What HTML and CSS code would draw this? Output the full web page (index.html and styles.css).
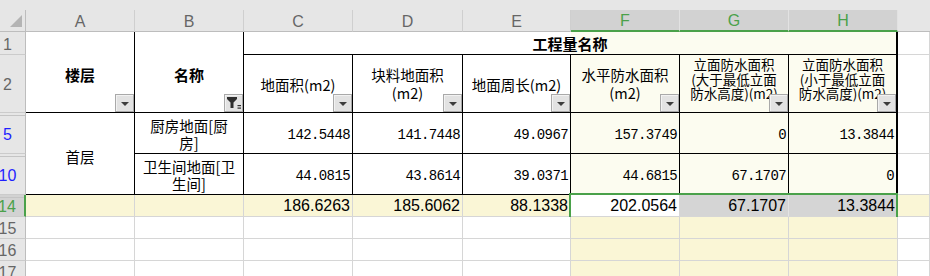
FILE: index.html
```html
<!DOCTYPE html>
<html lang="zh-CN">
<head>
<meta charset="utf-8">
<title>工程量名称</title>
<link rel="stylesheet" href="styles.css">
</head>
<body>
<div class="sheet">
  <div class="strip"></div>

  <!-- column header -->
  <div class="corner"><svg width="25" height="21" viewBox="0 0 25 21"><polygon points="22,5 22,17 10,17" fill="#b4b4b4"/></svg></div>
  <div class="colhdr ca">A</div>
  <div class="colhdr cb">B</div>
  <div class="colhdr cc">C</div>
  <div class="colhdr cd">D</div>
  <div class="colhdr ce">E</div>
  <div class="colhdr cf sel">F</div>
  <div class="colhdr cg sel">G</div>
  <div class="colhdr ch sel">H</div>
  <div class="colhdr ci"></div>

  <!-- row 1 -->
  <div class="rowhdr r1"><span>1</span></div>
  <div class="cell tb ca r12 bold pad4"><span>楼层</span><span class="fbtn"></span></div>
  <div class="cell tb cb r12 bold pad4"><span>名称</span><span class="fbtn on"><svg width="19" height="18" viewBox="0 0 19 18"><polygon points="3,3 13,3 13,5 9.5,8.5 9.5,14 6.5,14 6.5,8.5 3,5" fill="#2e2e2e"/><rect x="13.5" y="11" width="3.5" height="1.2" fill="#2e2e2e"/><rect x="13.5" y="13.5" width="3.5" height="1.2" fill="#2e2e2e"/></svg></span></div>
  <div class="cell tb title r1 bold"><span>工程量名称</span></div>
  <div class="cell ci r1"></div>

  <!-- row 2 -->
  <div class="rowhdr r2"><span>2</span></div>
  <div class="cell tb cc r2 hd pad2"><span>地面积(m2)</span><span class="fbtn"></span></div>
  <div class="cell tb cd r2 hd two"><span>块料地面积<br>(m2)</span><span class="fbtn"></span></div>
  <div class="cell tb ce r2 hd pad2"><span>地面周长(m2)</span><span class="fbtn"></span></div>
  <div class="cell tb cf r2 hd two cream"><span>水平防水面积<br>(m2)</span><span class="fbtn"></span></div>
  <div class="cell tb cg r2 hd three cream"><span>立面防水面积<br>(大于最低立面<br>防水高度)(m2)</span><span class="fbtn"></span></div>
  <div class="cell tb ch r2 hd three cream edge"><span>立面防水面积<br>(小于最低立面<br>防水高度)(m2)</span><span class="fbtn"></span></div>
  <div class="cell ci r2"></div>

  <!-- row 5 -->
  <div class="rowhdr r5 hidden-above blue"><span>5</span></div>
  <div class="cell tb ca r510 txt pad6"><span>首层</span></div>
  <div class="cell tb cb r5 txt two-b"><span>厨房地面[厨<br>房]</span></div>
  <div class="cell tb cc r5 num"><span>142.5448</span></div>
  <div class="cell tb cd r5 num"><span>141.7448</span></div>
  <div class="cell tb ce r5 num"><span>49.0967</span></div>
  <div class="cell tb cf r5 num cream"><span>157.3749</span></div>
  <div class="cell tb cg r5 num cream"><span>0</span></div>
  <div class="cell tb ch r5 num cream edge"><span>13.3844</span></div>
  <div class="cell ci r5"></div>

  <!-- row 10 -->
  <div class="rowhdr r10 hidden-above blue"><span>10</span></div>
  <div class="cell tb cb r10 txt two-b"><span>卫生间地面[卫<br>生间]</span></div>
  <div class="cell tb cc r10 num"><span>44.0815</span></div>
  <div class="cell tb cd r10 num"><span>43.8614</span></div>
  <div class="cell tb ce r10 num"><span>39.0371</span></div>
  <div class="cell tb cf r10 num cream"><span>44.6815</span></div>
  <div class="cell tb cg r10 num cream"><span>67.1707</span></div>
  <div class="cell tb ch r10 num cream edge"><span>0</span></div>
  <div class="cell ci r10"></div>

  <!-- row 14 -->
  <div class="rowhdr r14 hidden-above cur"><span>14</span></div>
  <div class="cell ca r14 yellow"></div>
  <div class="cell cb r14 yellow"></div>
  <div class="cell cc r14 sum yellow"><span>186.6263</span></div>
  <div class="cell cd r14 sum yellow"><span>185.6062</span></div>
  <div class="cell ce r14 sum yellow"><span>88.1338</span></div>
  <div class="cell cf r14 sum"><span>202.0564</span></div>
  <div class="cell cg r14 sum picked mid"><span>67.1707</span></div>
  <div class="cell ch r14 sum picked"><span>13.3844</span></div>
  <div class="cell ci r14 yellow"></div>
  <div class="selection"><span class="handle"></span></div>

  <!-- rows 15-17 -->
  <div class="rowhdr r15"><span>15</span></div>
  <div class="cell ca r15"></div><div class="cell cb r15"></div><div class="cell cc r15"></div><div class="cell cd r15"></div><div class="cell ce r15"></div>
  <div class="cell cf r15 yellow"></div><div class="cell cg r15 yellow"></div><div class="cell ch r15 yellow"></div><div class="cell ci r15"></div>

  <div class="rowhdr r16"><span>16</span></div>
  <div class="cell ca r16"></div><div class="cell cb r16"></div><div class="cell cc r16"></div><div class="cell cd r16"></div><div class="cell ce r16"></div>
  <div class="cell cf r16 yellow"></div><div class="cell cg r16 yellow"></div><div class="cell ch r16 yellow"></div><div class="cell ci r16"></div>

  <div class="rowhdr r17"><span>17</span></div>
  <div class="cell ca r17"></div><div class="cell cb r17"></div><div class="cell cc r17"></div><div class="cell cd r17"></div><div class="cell ce r17"></div>
  <div class="cell cf r17 yellow"></div><div class="cell cg r17 yellow"></div><div class="cell ch r17 yellow"></div><div class="cell ci r17"></div>
</div>
</body>
</html>
```

FILE: styles.css
```css
* { box-sizing: border-box; margin: 0; padding: 0; }

html, body {
  width: 930px;
  height: 276px;
  overflow: hidden;
  background: #ffffff;
}

body {
  font-family: "Noto Sans CJK SC", sans-serif;
  color: #000;
}

.sheet {
  position: relative;
  display: grid;
  grid-template-columns: 26px 109px 109px 109px 110px 108px 109px 109px 109px 32px;
  grid-template-rows: 10px 22px 23px 58px 41px 41px 22px 22px 22px 22px;
}

/* grid placement */
.ca { grid-column: 2; }
.cb { grid-column: 3; }
.cc { grid-column: 4; }
.cd { grid-column: 5; }
.ce { grid-column: 6; }
.cf { grid-column: 7; }
.cg { grid-column: 8; }
.ch { grid-column: 9; }
.ci { grid-column: 10; }

.r1 { grid-row: 3; }
.r2 { grid-row: 4; }
.r5 { grid-row: 5; }
.r10 { grid-row: 6; }
.r14 { grid-row: 7; }
.r15 { grid-row: 8; }
.r16 { grid-row: 9; }
.r17 { grid-row: 10; }
.r12 { grid-row: 3 / 5; }
.r510 { grid-row: 5 / 7; }

.strip {
  grid-column: 1 / -1;
  grid-row: 1;
  background: #e6e6e6;
}

/* column header */
.corner {
  grid-column: 1;
  grid-row: 2;
  background: #e6e6e6;
  border-right: 1px solid #bdbdbd;
  border-bottom: 1px solid #bdbdbd;
}
.corner svg { display: block; }

.colhdr {
  grid-row: 2;
  display: flex;
  align-items: center;
  justify-content: center;
  padding-top: 2px;
  background: #e6e6e6;
  border-right: 1px solid #cfcfcf;
  border-bottom: 1px solid #bdbdbd;
  font-family: "Liberation Sans", Arial, sans-serif;
  font-size: 16px;
  color: #666666;
}
.colhdr.sel {
  background: #d2d2d2;
  color: #4aa14a;
  border-right-color: #e2e2e2;
  border-bottom: 2px solid #4aa14a;
}
.colhdr.ci { border-right: none; }

/* row header */
.rowhdr {
  grid-column: 1;
  display: flex;
  align-items: center;
  justify-content: center;
  padding-right: 10px;
  padding-top: 3px;
  background: #e6e6e6;
  border-right: 1px solid #bdbdbd;
  border-bottom: 1px solid #cbcbcb;
  font-family: "Liberation Sans", Arial, sans-serif;
  font-size: 16px;
  color: #666666;
  white-space: nowrap;
  overflow: hidden;
}
.rowhdr span { flex: none; }
.rowhdr.hidden-above {
  box-shadow: inset 0 2px 0 #e6e6e6, inset 0 3px 0 #c4c4c4;
}
.rowhdr.blue { color: #1f1fff; }
.rowhdr.cur {
  background: #d2d2d2;
  color: #4aa14a;
  border-right: 2px solid #4aa14a;
  box-shadow: inset 0 2px 0 #d2d2d2, inset 0 3px 0 #c4c4c4;
}

/* cells */
.cell {
  position: relative;
  display: flex;
  align-items: center;
  justify-content: center;
  background: #ffffff;
  border-right: 1px solid #d6d6d6;
  border-bottom: 1px solid #d6d6d6;
  overflow: hidden;
  white-space: nowrap;
  font-size: 14.5px;
}
.cell.tb { border-color: #000000; }
.cell.edge { border-right-width: 2px; }
.cell.cream { background: #fcfcf0; }
.cell.yellow { background: #faf6d6; }
.cell.picked { background: #d5d5d5; }
.cell.picked.mid { border-right-color: #e4e4e4; }

.bold { font-weight: 700; font-size: 15px; }
.pad4 { padding-top: 4px; }
.pad2 { padding-top: 2px; }
.pad6 { padding-top: 5px; }

.title {
  grid-column: 4 / 10;
  border-right-width: 2px;
  background: linear-gradient(to right, #ffffff 327px, #fcfcf0 327px);
}

.hd span:first-child { text-align: center; }
.hd.two { line-height: 18px; padding-top: 1px; }
.hd.three {
  align-items: flex-start;
  font-size: 13.5px;
  line-height: 14.5px;
  padding-top: 2px;
}

.txt span { text-align: center; }
.two-b { line-height: 17px; padding-top: 2px; }

.num {
  justify-content: flex-end;
  padding-right: 2px;
  padding-top: 4px;
  font-family: "Liberation Mono", monospace;
  font-size: 14px;
  letter-spacing: -0.6px;
}

.sum {
  justify-content: flex-end;
  padding-right: 2px;
  padding-top: 1px;
  font-family: "Liberation Sans", Arial, sans-serif;
  font-size: 16px;
}

/* filter buttons */
.fbtn {
  position: absolute;
  right: 0;
  bottom: 0;
  width: 19px;
  height: 18px;
  display: flex;
  align-items: center;
  justify-content: center;
  background: #e2e2e2;
  border: 1px solid #a9a9a9;
  box-shadow: inset 1px 1px 0 #f2f2f2;
}
.fbtn::after {
  content: "";
  margin-top: 2px;
  border-left: 4px solid transparent;
  border-right: 4px solid transparent;
  border-top: 4px solid #3d3d3d;
}
.fbtn.on::after { display: none; }
.fbtn.on svg { display: block; flex: none; }

/* selection */
.selection {
  position: absolute;
  grid-column: 7 / 10;
  grid-row: 7;
  top: -2px;
  left: -2px;
  right: 0;
  bottom: 0;
  border: 2px solid #4aa14a;
  pointer-events: none;
}
.handle {
  position: absolute;
  right: -4px;
  bottom: -4px;
  width: 7px;
  height: 7px;
  background: #4aa14a;
  border-left: 1px solid #ffffff;
  border-top: 1px solid #ffffff;
}
```
